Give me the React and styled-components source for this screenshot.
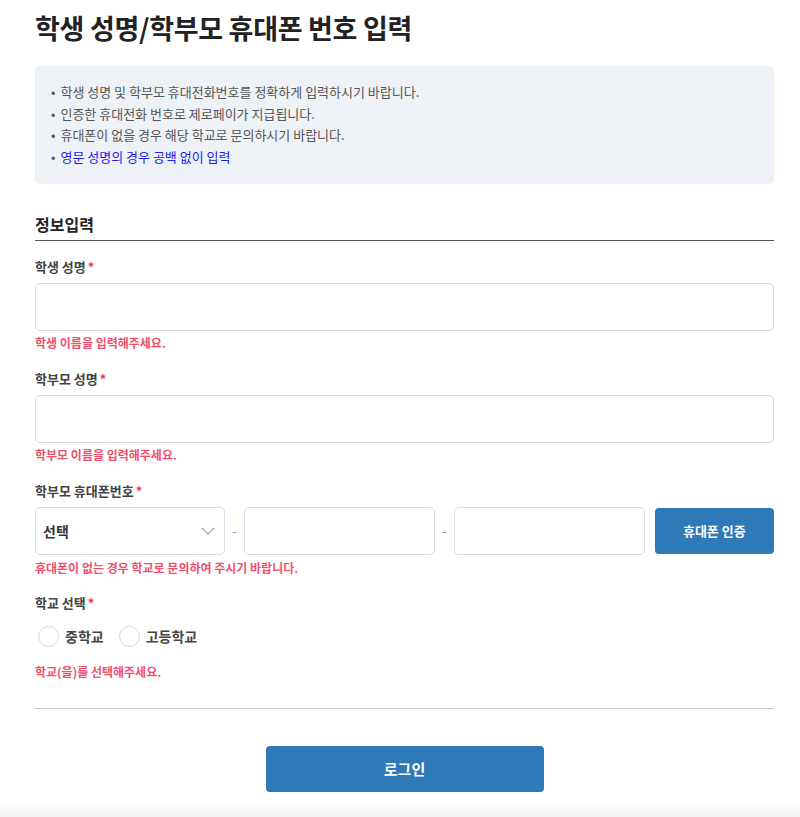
import React, { useState } from 'react';
import styled, { createGlobalStyle } from 'styled-components';

const GlobalStyle = createGlobalStyle`
  html, body {
    margin: 0;
    padding: 0;
    background: #fff;
  }
  body {
    font-family: 'Noto Sans CJK KR', 'Noto Sans', sans-serif;
    color: #222;
  }
  * { box-sizing: border-box; }
`;

const Page = styled.div`
  min-height: 817px;
  display: flex;
  flex-direction: column;
`;

const Main = styled.main`
  padding: 8px 26px 0 35px;
`;

const Title = styled.h1`
  margin: 0;
  font-size: 27px;
  line-height: 40px;
  font-weight: 700;
  color: #222;
  letter-spacing: -0.3px;
`;

const Notice = styled.ul`
  margin: 18px 0 0;
  padding: 15px 18px 16px 16px;
  list-style: none;
  background: #eef2f6;
  border-radius: 5px;
`;

const NoticeItem = styled.li`
  font-size: 13px;
  line-height: 21.7px;
  color: ${p => (p.$accent ? '#1b22f0' : '#555')};
  &::before {
    content: '•';
    color: #555;
    margin-right: 5px;
  }
`;

const SectionTitle = styled.h2`
  margin: 29px 0 0;
  padding-bottom: 5px;
  font-size: 16px;
  line-height: 22px;
  font-weight: 700;
  color: #222;
  border-bottom: 1px solid #555;
`;

const Field = styled.div`
  margin-top: ${p => (p.$first ? 16 : 17)}px;
`;

const Label = styled.div`
  font-size: 13px;
  line-height: 20px;
  font-weight: 700;
  color: #444;
  margin-bottom: 6px;
  & span {
    color: #e8395a;
    margin-left: 2px;
  }
`;

const TextInput = styled.input`
  display: block;
  width: 100%;
  height: 48px;
  border: 1px solid #d7dde8;
  border-radius: 5px;
  padding: 0 12px;
  font: inherit;
  font-size: 14px;
  outline: none;
  background: #fff;
`;

const ErrorText = styled.p`
  margin: ${p => p.$top || 3}px 0 0;
  font-size: 12px;
  line-height: 18px;
  font-weight: 700;
  color: #f0506e;
`;

const PhoneRow = styled.div`
  display: flex;
  align-items: center;
`;

const SelectBox = styled.div`
  width: 191px;
  height: 48px;
  border: 1px solid #d7dde8;
  border-radius: 5px;
  display: flex;
  align-items: center;
  justify-content: space-between;
  padding: 0 9px 0 7px;
  font-size: 14px;
  font-weight: 700;
  color: #333;
`;

const Dash = styled.span`
  width: 19px;
  text-align: center;
  font-size: 12px;
  color: #888;
`;

const PhoneInput = styled(TextInput)`
  width: 191px;
  flex: none;
`;

const BlueButton = styled.button`
  border: none;
  border-radius: 4px;
  background: #2e79b8;
  color: #fff;
  font: inherit;
  font-weight: 700;
  cursor: pointer;
`;

const VerifyButton = styled(BlueButton)`
  width: 120px;
  height: 46px;
  margin-left: 10px;
  font-size: 13px;
`;

const RadioGroup = styled.div`
  display: flex;
  align-items: center;
  gap: 15px;
  padding: 7px 0 0 3px;
`;

const RadioLabel = styled.label`
  display: flex;
  align-items: center;
  gap: 6px;
  font-size: 14px;
  font-weight: 700;
  color: #444;
  cursor: pointer;
`;

const RadioCircle = styled.span`
  width: 21px;
  height: 21px;
  border-radius: 50%;
  border: 1px solid #d2d8e2;
  background: #fff;
`;

const Divider = styled.hr`
  margin: 27px 0 0;
  border: none;
  border-top: 1px solid #c3cad6;
`;

const ButtonArea = styled.div`
  display: flex;
  justify-content: center;
  padding: 37px 0 11px;
`;

const LoginButton = styled(BlueButton)`
  width: 278px;
  height: 46px;
  font-size: 15px;
`;

const Footer = styled.footer`
  flex: 1;
  min-height: 14px;
  background: linear-gradient(#fcfcfc, #f5f5f5);
`;

const Chevron = () => (
  <svg width="14" height="8" viewBox="0 0 14 8" fill="none">
    <path d="M1 1l6 6 6-6" stroke="#9aa3b0" strokeWidth="1.2" />
  </svg>
);

export default function App() {
  const [school, setSchool] = useState(null);
  return (
    <Page>
      <GlobalStyle />
      <Main>
        <Title>학생 성명/학부모 휴대폰 번호 입력</Title>
        <Notice>
          <NoticeItem>학생 성명 및 학부모 휴대전화번호를 정확하게 입력하시기 바랍니다.</NoticeItem>
          <NoticeItem>인증한 휴대전화 번호로 제로페이가 지급됩니다.</NoticeItem>
          <NoticeItem>휴대폰이 없을 경우 해당 학교로 문의하시기 바랍니다.</NoticeItem>
          <NoticeItem $accent>영문 성명의 경우 공백 없이 입력</NoticeItem>
        </Notice>

        <SectionTitle>정보입력</SectionTitle>

        <Field $first>
          <Label>학생 성명<span>*</span></Label>
          <TextInput type="text" />
          <ErrorText>학생 이름을 입력해주세요.</ErrorText>
        </Field>

        <Field>
          <Label>학부모 성명<span>*</span></Label>
          <TextInput type="text" />
          <ErrorText>학부모 이름을 입력해주세요.</ErrorText>
        </Field>

        <Field>
          <Label>학부모 휴대폰번호<span>*</span></Label>
          <PhoneRow>
            <SelectBox>
              선택
              <Chevron />
            </SelectBox>
            <Dash>-</Dash>
            <PhoneInput type="text" />
            <Dash>-</Dash>
            <PhoneInput type="text" />
            <VerifyButton>휴대폰 인증</VerifyButton>
          </PhoneRow>
          <ErrorText $top={4}>휴대폰이 없는 경우 학교로 문의하여 주시기 바랍니다.</ErrorText>
        </Field>

        <Field $first>
          <Label>학교 선택<span>*</span></Label>
          <RadioGroup>
            <RadioLabel onClick={() => setSchool('middle')}>
              <RadioCircle />
              중학교
            </RadioLabel>
            <RadioLabel onClick={() => setSchool('high')}>
              <RadioCircle />
              고등학교
            </RadioLabel>
          </RadioGroup>
          {!school && <ErrorText $top={16}>학교(을)를 선택해주세요.</ErrorText>}
        </Field>

        <Divider />

        <ButtonArea>
          <LoginButton>로그인</LoginButton>
        </ButtonArea>
      </Main>
      <Footer />
    </Page>
  );
}
